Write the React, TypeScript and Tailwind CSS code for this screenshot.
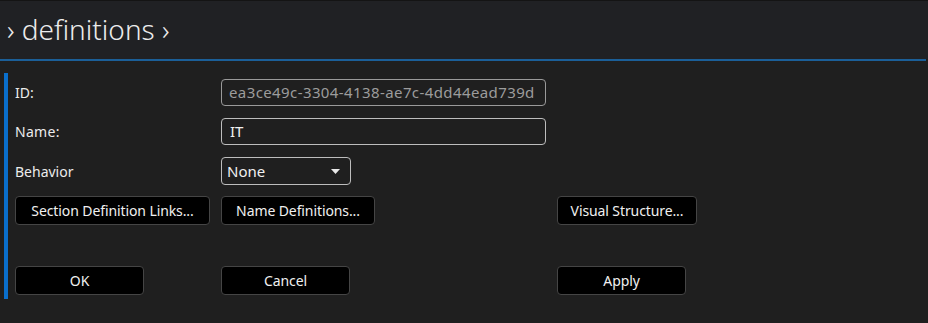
const font = { fontFamily: '"Noto Sans", "Open Sans", sans-serif' };

function Btn({ label, w }: { label: string; w: string }) {
  return (
    <button
      className={`${w} h-[29px] rounded-[4px] border border-[#454545] bg-black text-[14px] tracking-[-0.1px] text-[#f0f0f0] flex items-center justify-center`}
    >
      {label}
    </button>
  );
}

export default function App() {
  return (
    <div style={font} className="w-[928px] h-[323px] bg-[#1f1f1f] overflow-hidden">
      <div className="h-[59px] border-t border-[#141414] bg-[#202124] flex items-center pl-[7px] pb-[2px]">
        <span className="text-[28px] font-light text-[#ececec]">› definitions ›</span>
      </div>
      <div className="h-[2px] w-[926px] bg-[#1b5f98]" />

      <div className="flex pt-[12px]">
        <div className="ml-[4px] w-[4px] h-[226px] bg-[#0a6fcc]" />
        <div className="ml-[7px] pt-[6px] flex flex-col">
          <div className="flex items-center h-[27px]">
            <span className="w-[206px] text-[14px] text-[#ececec]">ID:</span>
            <div className="w-[325px] h-[27px] rounded-[4px] border border-[#9a9a9a] px-[7px] flex items-center text-[15px] tracking-[0.4px] text-[#9c9c9c]">
              ea3ce49c-3304-4138-ae7c-4dd44ead739d
            </div>
          </div>
          <div className="flex items-center h-[27px] mt-[12px]">
            <span className="w-[206px] text-[14px] tracking-[0.3px] text-[#ececec]">Name:</span>
            <div className="w-[325px] h-[27px] rounded-[4px] border border-[#bdbdbd] px-[8px] flex items-center text-[15px] text-[#f0f0f0]">
              IT
            </div>
          </div>
          <div className="flex items-center h-[28px] mt-[12px]">
            <span className="w-[206px] text-[14px] text-[#ececec]">Behavior</span>
            <div className="w-[130px] h-[28px] rounded-[4px] border border-[#bdbdbd] pl-[5px] pr-[10px] flex items-center justify-between text-[15px] text-[#f0f0f0]">
              <span>None</span>
              <svg width="9" height="5" viewBox="0 0 9 5">
                <path d="M0 0 L9 0 L4.5 5 Z" fill="#e8e8e8" />
              </svg>
            </div>
          </div>
          <div className="flex items-center mt-[11px]">
            <div className="w-[206px]">
              <Btn label="Section Definition Links..." w="w-[195px]" />
            </div>
            <div className="w-[336px]">
              <Btn label="Name Definitions..." w="w-[154px]" />
            </div>
            <Btn label="Visual Structure..." w="w-[140px]" />
          </div>
          <div className="flex items-center mt-[41px]">
            <div className="w-[206px]">
              <Btn label="OK" w="w-[129px]" />
            </div>
            <div className="w-[336px]">
              <Btn label="Cancel" w="w-[129px]" />
            </div>
            <Btn label="Apply" w="w-[129px]" />
          </div>
        </div>
      </div>
    </div>
  );
}
